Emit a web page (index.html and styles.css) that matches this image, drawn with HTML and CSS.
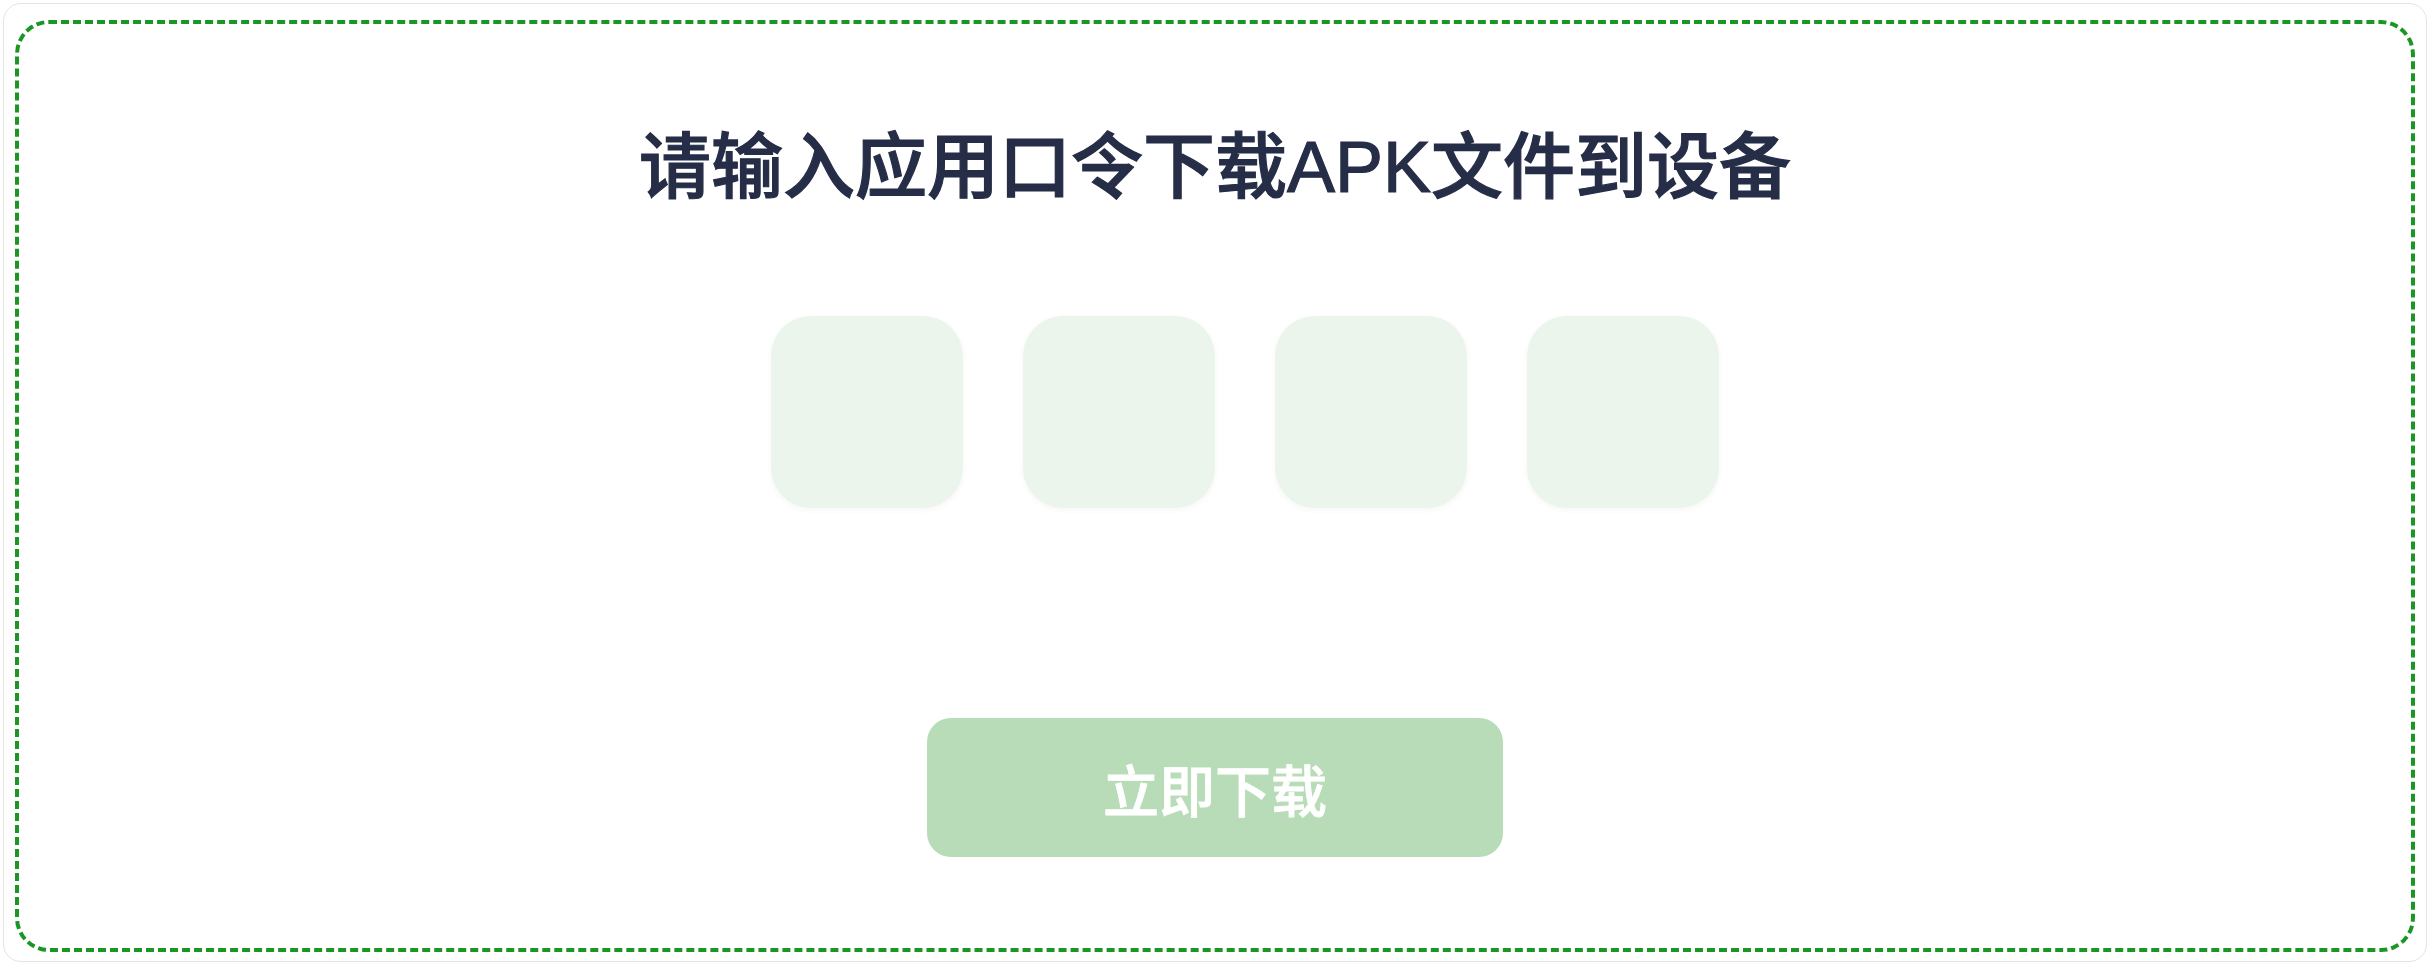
FILE: index.html
```html
<!DOCTYPE html>
<html lang="zh-CN">
<head>
<meta charset="utf-8">
<title>APK 下载</title>
<link rel="stylesheet" href="styles.css">
</head>
<body>
<div class="page">
  <div class="frame">
    <div class="panel">
      <h1 class="title">请输入应用口令下载APK文件到设备</h1>
      <div class="codes">
        <div class="code"></div>
        <div class="code"></div>
        <div class="code"></div>
        <div class="code"></div>
      </div>
      <button class="download" type="button">立即下载</button>
    </div>
  </div>
</div>
</body>
</html>
```

FILE: styles.css
```css
html, body {
  margin: 0;
  padding: 0;
  background: #ffffff;
}
body {
  font-family: "Noto Sans CJK SC", "Noto Sans", sans-serif;
}
.page {
  padding: 3px 5px 4px 3px;
  box-sizing: border-box;
  height: 966px;
}
.frame {
  box-sizing: border-box;
  height: 100%;
  border: 1px solid #e4e4e4;
  border-radius: 18px;
  padding: 16px 11px 9px 11px;
}
.panel {
  box-sizing: border-box;
  height: 100%;
  border: 4px dashed #1a9624;
  border-radius: 34px;
  display: flex;
  flex-direction: column;
  align-items: center;
}
.title {
  margin: 107px 0 0 0;
  font-family: "Liberation Sans", "Noto Sans CJK SC", sans-serif;
  font-size: 72px;
  line-height: 72px;
  font-weight: 500;
  color: #262d47;
  -webkit-text-stroke: 1.2px #262d47;
}
.codes {
  display: flex;
  gap: 60px;
  padding-left: 60px;
  margin-top: 113px;
}
.code {
  width: 192px;
  height: 192px;
  border-radius: 40px;
  background: #ecf5ec;
  box-shadow: 0 2px 6px rgba(0, 0, 0, 0.04);
}
.download {
  margin-top: 210px;
  width: 576px;
  height: 139px;
  border: none;
  border-radius: 24px;
  background: #b7dcb7;
  color: #ffffff;
  font-family: "Noto Sans CJK SC", "Noto Sans", sans-serif;
  font-size: 56px;
  font-weight: 500;
  -webkit-text-stroke: 0.8px #ffffff;
  padding: 0;
}
```
